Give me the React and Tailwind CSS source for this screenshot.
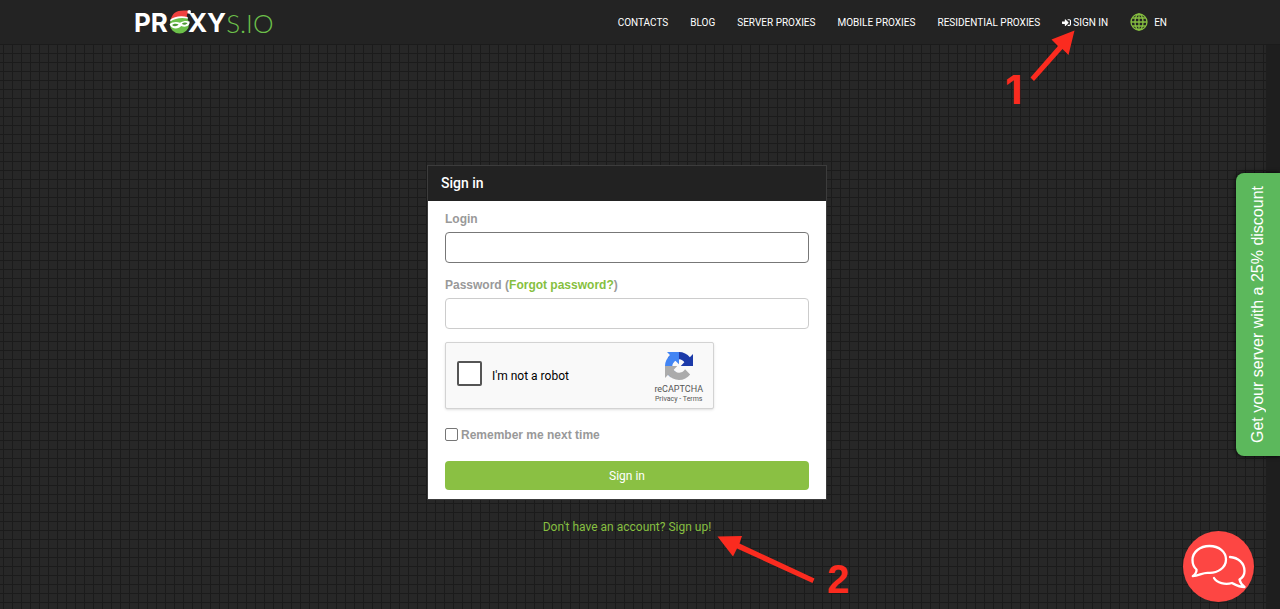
import { FaSignInAlt } from "react-icons/fa";

const navLinks = [
  "CONTACTS",
  "BLOG",
  "SERVER PROXIES",
  "MOBILE PROXIES",
  "RESIDENTIAL PROXIES",
];

const Mascot = () => (
  <svg viewBox="0 0 24 26" className="w-6 h-[26px] -mr-1" aria-hidden="true">
    <circle cx="11.500" cy="14" r="9.600" fill="#6cc04a" />
    <path d="M2.800 9.500 C4.500 2.500 9 -0.500 20 0.600 L20.500 3 C18.500 4 18.500 5.500 19.500 7.500 C13 6 8 7 2.800 9.500Z" fill="#f0413f" />
    <path d="M2.200 9.800 C6 6.500 13 5.300 19.800 7.200 L20 8.700 C13 7 7 8.500 2.200 11.500Z" fill="#fff" />
    <circle cx="21.200" cy="1.900" r="1.800" fill="#fff" />
    <path d="M1.600 14.200 C4 11.800 9 11.500 12 12.800 C15 10.800 19 10.500 21.600 11.600 C22 16 17.500 18 13.200 16 C10.500 19.600 3.500 19.600 1.600 14.200Z" fill="#fff" />
    <path d="M4 15 C6 13.300 9 13.400 10.600 14.600 C8.800 16.600 5.800 16.800 4 15Z M13.800 13.800 C15.300 12.300 18 12.200 19.600 13 C18.200 15 15.500 15.300 13.800 13.800Z" fill="#4d9a35" />
  </svg>
);

const Globe = () => (
  <svg viewBox="0 0 18 18" className="w-[18px] h-[18px]" fill="none" stroke="#86bf40" strokeWidth="1.3" aria-hidden="true">
    <circle cx="9" cy="9" r="8" />
    <ellipse cx="9" cy="9" rx="4" ry="8" />
    <path d="M9 1V17M1 9H17M2.200 5H15.800M2.200 13H15.800" />
  </svg>
);

const RecaptchaLogo = () => (
  <svg viewBox="0 0 64 64" className="w-7 h-7 mb-[3px]" aria-hidden="true">
    <path d="M64 31.900c0-.5 0-.9 0-1.400V4.600l-7.200 7.200C51 4.600 42 0 32 0 21.600 0 12.300 5 6.500 12.800l11.700 11.900c1.200-2.100 2.800-4 4.700-5.300 2-1.500 4.800-2.800 8.700-2.800.5 0 .8.1 1.100.2 4.800.4 9 3 11.500 6.900L36 32z" fill="#1c3aa9" />
    <path d="M31.900 0H4.600l7.200 7.200C4.600 13 0 22 0 32c0 10.400 5 19.700 12.800 25.500L24.700 45.800c-2.100-1.200-4-2.800-5.300-4.700-1.500-2-2.800-4.800-2.800-8.700 0-.5.1-.8.2-1.100.4-4.800 3-9 6.900-11.500L32 28z" fill="#4285f4" />
    <path d="M0 32V59.400l7.200-7.200C13 59.400 22 64 32 64c10.400 0 19.700-5 25.500-12.800L45.800 39.300c-1.200 2.100-2.800 4-4.700 5.300-2 1.500-4.800 2.800-8.700 2.800-.5 0-.8-.1-1.100-.2-4.800-.4-9-3-11.500-6.900L28 32z" fill="#ababab" />
  </svg>
);

const Header = () => (
  <header className="flex items-center justify-between h-[45px] pl-[134px] pr-[113px] bg-[#232323] border-b border-[#1b1b1b]">
    <a href="#" aria-label="Proxys.io" className="flex items-center h-9 pt-0.5 text-[26px] leading-9 whitespace-nowrap">
      <span className="font-['Inter',sans-serif] font-bold text-white">PR</span>
      <Mascot />
      <span className="font-['Inter',sans-serif] font-bold text-white">XY</span>
      <span className="font-['Lato',sans-serif] font-light text-[#6cc04a]">S.IO</span>
    </a>
    <nav className="flex items-center gap-[22px] text-[10px] text-white whitespace-nowrap">
      {navLinks.map((link) => (
        <a key={link} href="#">
          {link}
        </a>
      ))}
      <a href="#" className="flex items-center gap-0.5">
        <FaSignInAlt className="w-[9px] h-[9px]" />
        SIGN IN
      </a>
      <a href="#" className="flex items-center gap-1.5">
        <Globe />
        EN
      </a>
    </nav>
  </header>
);

const Recaptcha = () => (
  <div className="flex items-center justify-between w-[269px] h-[67px] mt-[13px] pl-[11px] pr-2.5 bg-[#f9f9f9] border border-[#d3d3d3] rounded-xs shadow-sm">
    <div className="flex items-center gap-2.5">
      <input
        id="robot"
        type="checkbox"
        className="appearance-none w-[25px] h-[25px] mb-1 bg-white border-2 border-[#555] rounded-xs"
      />
      <label htmlFor="robot" className="text-xs leading-5 text-black">
        I'm not a robot
      </label>
    </div>
    <div className="flex flex-col items-center pt-[3px] text-[#555]">
      <RecaptchaLogo />
      <span className="text-[9px] leading-3">reCAPTCHA</span>
      <span className="text-[7px] leading-2">
        <a href="#">Privacy</a> - <a href="#">Terms</a>
      </span>
    </div>
  </div>
);

const SignInForm = () => (
  <form className="w-full max-w-[400px] border border-[#3c3c3c]">
    <h1 className="h-[35px] px-[13px] text-sm leading-[35px] font-medium text-white bg-[#222]">
      Sign in
    </h1>
    <div className="px-[17px] pt-2 pb-[9px] bg-white">
      <label htmlFor="login" className="block font-['Liberation_Sans',sans-serif] text-xs leading-5 font-bold text-[#999]">
        Login
      </label>
      <input
        id="login"
        type="text"
        className="block w-full h-[31px] mt-[3px] px-3 bg-white border border-[#777] rounded-sm"
      />
      <div className="mt-3 font-['Liberation_Sans',sans-serif] text-xs leading-5 font-bold text-[#999]">
        <label htmlFor="password">Password</label> (
        <a href="#" className="text-[#86bf40]">
          Forgot password?
        </a>
        )
      </div>
      <input
        id="password"
        type="password"
        className="block w-full h-[31px] mt-[3px] px-3 bg-white border border-[#ccc] rounded-sm"
      />
      <Recaptcha />
      <div className="flex items-center gap-[3px] mt-4 font-['Liberation_Sans',sans-serif] text-xs leading-5 font-bold text-[#999]">
        <input
          id="remember"
          type="checkbox"
          className="appearance-none w-[13px] h-[13px] mb-0.5 bg-white border border-[#767676] rounded-xs"
        />
        <label htmlFor="remember">Remember me next time</label>
      </div>
      <button type="button" className="block w-full h-[29px] mt-4 text-xs text-white bg-[#8ac043] rounded-sm">
        Sign in
      </button>
    </div>
  </form>
);

const Annotations = () => (
  <div className="pointer-events-none text-[40px] leading-10 font-bold text-[#fb2b1f]">
    <span className="absolute left-[1005px] top-[70px] font-['Inter',sans-serif]">1</span>
    <svg viewBox="0 0 46 52" className="absolute left-[1030px] top-[30px] w-[46px] h-[52px]" fill="#fb2b1f" aria-hidden="true">
      <path d="M44.500 0.500 L38.500 25 L32.500 19 L4 51 L0.500 47.500 L28 16 L21.500 9.500Z" />
    </svg>
    <svg viewBox="0 0 98 48" className="absolute left-[717px] top-[536px] w-[98px] h-[48px]" fill="#fb2b1f" aria-hidden="true">
      <path d="M0.500 0.500 L25 0 L22.500 7.500 L97.500 42.500 L95.500 47 L20 12.500 L16 20.500Z" />
    </svg>
    <span className="absolute left-[827px] top-[559px] font-['Liberation_Sans',sans-serif]">2</span>
  </div>
);

const ChatButton = () => (
  <button
    type="button"
    aria-label="Open chat"
    className="absolute right-[26px] bottom-[7px] flex items-center justify-center w-[71px] h-[71px] rounded-full bg-[#fd4643]"
  >
    <svg viewBox="0 0 71 71" className="w-full h-full" fill="none" stroke="#fff" strokeWidth="2.300" strokeLinecap="round" strokeLinejoin="round" aria-hidden="true">
      <path d="M13.500 38.500 C10 35.500 9.500 32 9.500 29 C9.500 21 17 15 26.500 15 C36 15 43 21 43 28.500 C43 36.500 35 42.500 25 41.800 C20 41.500 16 44.500 9.800 45.200 C12.500 43 13.800 40.500 13.500 38.500Z" />
      <path d="M47 26 C55 26.500 61.500 32 61.500 40 C61.500 43.500 60 46.500 56.500 48.500 C57 51 59 54 61.500 56 C56 56 52 53.500 49 52 C42 54 34 52 31 47" />
    </svg>
  </button>
);

const App = () => {
  return (
    <div className="relative flex flex-col min-h-screen overflow-hidden bg-[#1e1e1e] font-['Roboto',sans-serif]">
      <Header />
      <main className="flex flex-col items-center flex-1 mr-3.5 pr-3 pt-[120px] bg-[#272727] bg-[linear-gradient(to_right,#1b1b1b_1px,transparent_1px),linear-gradient(to_bottom,#1b1b1b_1px,transparent_1px)] bg-size-[9px_9px] bg-position-[3px_8px]">
        <SignInForm />
        <a href="#" className="mt-[17px] text-xs leading-5 text-[#86bf40]">
          Don't have an account? Sign up!
        </a>
      </main>
      <a
        href="#"
        className="absolute right-0 top-[173px] flex items-center justify-center w-11 h-[283px] bg-[#5cb85c] rounded-l-lg shadow-[0_0_5px_#000] font-['Liberation_Sans',sans-serif] text-base text-white whitespace-nowrap"
      >
        <span className="[writing-mode:vertical-rl] rotate-180">
          Get your server with a 25% discount
        </span>
      </a>
      <ChatButton />
      <Annotations />
    </div>
  );
};

export default App;
